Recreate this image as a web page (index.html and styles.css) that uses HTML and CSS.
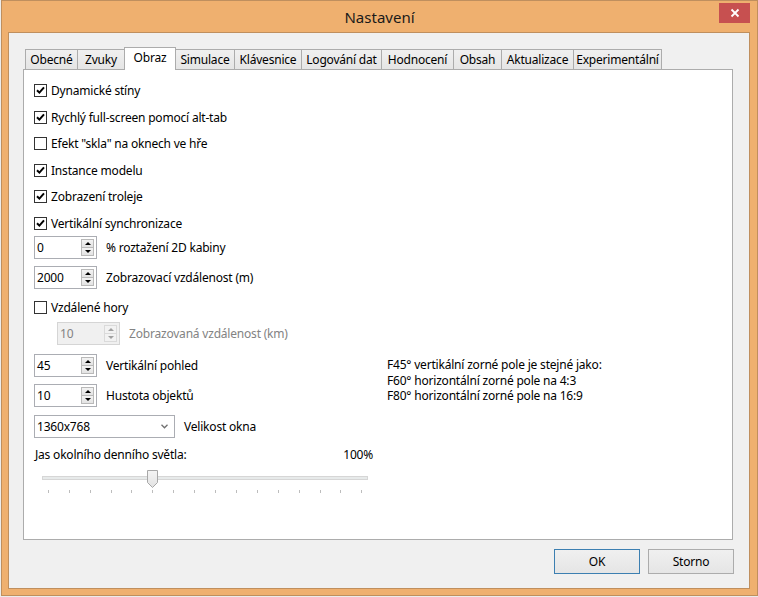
FILE: index.html
```html
<!DOCTYPE html>
<html lang="cs">

<head>
    <meta charset="UTF-8">
    <title>Nastavení</title>
    <link rel="stylesheet" href="styles.css">
</head>

<body>
    <div class="window">
        <div class="titlebar">
            <span class="title">Nastavení</span>
            <button class="close" title="Zavřít">
                <svg width="10" height="10" viewBox="0 0 10 10">
                    <path d="M1.5 1.5 L8.5 8.5 M8.5 1.5 L1.5 8.5" stroke="#fff" stroke-width="1.8" fill="none" />
                </svg>
            </button>
        </div>

        <div class="client">
            <div class="tabs">
                <div class="tab w53">Obecné</div>
                <div class="tab w48">Zvuky</div>
                <div class="tab w52 selected">Obraz</div>
                <div class="tab w60">Simulace</div>
                <div class="tab w68">Klávesnice</div>
                <div class="tab w81">Logování dat</div>
                <div class="tab w73">Hodnocení</div>
                <div class="tab w49">Obsah</div>
                <div class="tab w73">Aktualizace</div>
                <div class="tab w89">Experimentální</div>
            </div>

            <div class="panel">
                <div class="checks">
                    <label class="check"><span class="box on"></span>Dynamické stíny</label>
                    <label class="check"><span class="box on"></span>Rychlý full-screen pomocí alt-tab</label>
                    <label class="check"><span class="box"></span>Efekt "skla" na oknech ve hře</label>
                    <label class="check"><span class="box on"></span>Instance modelu</label>
                    <label class="check"><span class="box on"></span>Zobrazení troleje</label>
                    <label class="check"><span class="box on"></span>Vertikální synchronizace</label>
                </div>

                <div class="field mt6">
                    <div class="spin">
                        <span>0</span>
                        <span class="spin-btns"><span class="spin-up"></span><span class="spin-down"></span></span>
                    </div>
                    <span>% roztažení 2D kabiny</span>
                </div>

                <div class="field mt7">
                    <div class="spin">
                        <span>2000</span>
                        <span class="spin-btns"><span class="spin-up"></span><span class="spin-down"></span></span>
                    </div>
                    <span>Zobrazovací vzdálenost (m)</span>
                </div>

                <label class="check mt12"><span class="box"></span>Vzdálené hory</label>

                <div class="field mt8 indent disabled">
                    <div class="spin">
                        <span>10</span>
                        <span class="spin-btns"><span class="spin-up"></span><span class="spin-down"></span></span>
                    </div>
                    <span>Zobrazovaná vzdálenost (km)</span>
                </div>

                <div class="lower mt9">
                    <div class="lower-left">
                        <div class="field">
                            <div class="spin">
                                <span>45</span>
                                <span class="spin-btns"><span class="spin-up"></span><span class="spin-down"></span></span>
                            </div>
                            <span>Vertikální pohled</span>
                        </div>

                        <div class="field mt6">
                            <div class="spin">
                                <span>10</span>
                                <span class="spin-btns"><span class="spin-up"></span><span class="spin-down"></span></span>
                            </div>
                            <span>Hustota objektů</span>
                        </div>

                        <div class="field mt8">
                            <div class="combo">
                                <span>1360x768</span>
                                <svg width="7" height="5" viewBox="0 0 7 5">
                                    <path d="M0.5 0.8 L3.5 3.8 L6.5 0.8" stroke="#707070" stroke-width="1.3" fill="none" />
                                </svg>
                            </div>
                            <span>Velikost okna</span>
                        </div>

                        <div class="slider-head mt9">
                            <span>Jas okolního denního světla:</span>
                            <span>100%</span>
                        </div>

                        <svg class="slider" width="340" height="28" viewBox="0 0 340 28">
                            <defs>
                                <linearGradient id="thumbFill" x1="0" y1="0" x2="0" y2="1">
                                    <stop offset="0" stop-color="#f4f4f4" />
                                    <stop offset="1" stop-color="#e3e3e3" />
                                </linearGradient>
                            </defs>
                            <rect x="8.5" y="9.5" width="325" height="3" fill="#e7eaea" stroke="#d6d6d6" />
                            <g stroke="#bdbdbd" stroke-width="1">
                                <line x1="14.5" y1="23" x2="14.5" y2="26" />
                                <line x1="35.5" y1="23" x2="35.5" y2="26" />
                                <line x1="56.5" y1="23" x2="56.5" y2="26" />
                                <line x1="77.5" y1="23" x2="77.5" y2="26" />
                                <line x1="97.5" y1="23" x2="97.5" y2="26" />
                                <line x1="118.5" y1="23" x2="118.5" y2="26" />
                                <line x1="139.5" y1="23" x2="139.5" y2="26" />
                                <line x1="160.5" y1="23" x2="160.5" y2="26" />
                                <line x1="181.5" y1="23" x2="181.5" y2="26" />
                                <line x1="202.5" y1="23" x2="202.5" y2="26" />
                                <line x1="223.5" y1="23" x2="223.5" y2="26" />
                                <line x1="244.5" y1="23" x2="244.5" y2="26" />
                                <line x1="265.5" y1="23" x2="265.5" y2="26" />
                                <line x1="286.5" y1="23" x2="286.5" y2="26" />
                                <line x1="306.5" y1="23" x2="306.5" y2="26" />
                                <line x1="327.5" y1="23" x2="327.5" y2="26" />
                            </g>
                            <path d="M113.5 3.5 H123.5 V15.5 L118.5 20.5 L113.5 15.5 Z" fill="url(#thumbFill)" stroke="#a8a8a8" />
                        </svg>
                    </div>

                    <div class="fov-note">
                        <div>F45° vertikální zorné pole je stejné jako:</div>
                        <div>F60° horizontální zorné pole na 4:3</div>
                        <div>F80° horizontální zorné pole na 16:9</div>
                    </div>
                </div>
            </div>

            <div class="buttons">
                <button class="btn btn-default">OK</button>
                <button class="btn">Storno</button>
            </div>
        </div>
    </div>
</body>

</html>
```

FILE: styles.css
```css
* {
    box-sizing: border-box;
}

body {
    margin: 0;
    background-color: #ececec;
    font-family: "Noto Sans", "Open Sans", sans-serif;
    font-size: 12px;
    letter-spacing: -0.2px;
    color: #000;
}

.window {
    width: 757px;
    height: 596px;
    margin-left: 1px;
    background-color: #efb06f;
    border: 1px solid #bf8f5e;
    display: flex;
    flex-direction: column;
}

/* title bar */
.titlebar {
    height: 31px;
    display: grid;
    grid-template-columns: 1fr auto 1fr;
    align-items: center;
}

.title {
    grid-column: 2;
    font-size: 15px;
    letter-spacing: 0;
    color: #1a1a1a;
}

.close {
    grid-column: 3;
    justify-self: end;
    align-self: start;
    width: 31px;
    height: 20px;
    margin: 2px 7px 0 0;
    padding: 0;
    border: none;
    background-color: #c75050;
    display: flex;
    align-items: center;
    justify-content: center;
}

/* dialog body */
.client {
    flex: 1;
    margin: 0 7px 6px 6px;
    border: 1px solid #bf8f5e;
    background-color: #f0f0f0;
    padding: 14px 15px 0 14px;
}

.tabs {
    display: flex;
    align-items: flex-end;
    height: 22px;
    padding-left: 2px;
}

.tab {
    height: 20px;
    border: 1px solid #acacac;
    border-bottom: none;
    background: linear-gradient(#f0f0f0, #e5e5e5);
    text-align: center;
    line-height: 20px;
    margin-left: -1px;
}

.tab:first-child {
    margin-left: 0;
}

.tab.selected {
    height: 23px;
    line-height: 19px;
    margin-bottom: -1px;
    background: #fff;
    position: relative;
    z-index: 1;
}

.w48 { width: 48px; }
.w49 { width: 49px; }
.w52 { width: 52px; }
.w53 { width: 53px; }
.w60 { width: 60px; }
.w68 { width: 68px; }
.w73 { width: 73px; }
.w81 { width: 81px; }
.w89 { width: 89px; }

.panel {
    width: 710px;
    height: 471px;
    border: 1px solid #acacac;
    background-color: #fff;
    padding: 14px 0 0 10px;
    display: flex;
    flex-direction: column;
    align-items: flex-start;
}

.mt6 { margin-top: 6.5px; }
.mt7 { margin-top: 7px; }
.mt8 { margin-top: 8px; }
.mt9 { margin-top: 9px; }
.mt12 { margin-top: 12px; }

/* checkboxes */
.checks {
    display: flex;
    flex-direction: column;
    gap: 13.5px;
}

.check {
    display: flex;
    align-items: center;
    height: 13px;
    white-space: nowrap;
}

.box {
    width: 13px;
    height: 13px;
    margin-right: 4px;
    border: 1px solid #333;
    background: #fff;
    flex-shrink: 0;
}

.box.on {
    background: #fff url("data:image/svg+xml,%3Csvg xmlns='http://www.w3.org/2000/svg' width='11' height='11'%3E%3Cpath d='M2 5.2 L4.4 7.6 L9 2.4' stroke='%23000' stroke-width='2' fill='none'/%3E%3C/svg%3E") no-repeat center;
}

/* spin boxes and combo */
.field {
    display: flex;
    align-items: center;
    gap: 9px;
    white-space: nowrap;
}

.indent {
    margin-left: 23px;
}

.spin {
    width: 63px;
    height: 23px;
    border: 1px solid #abadb3;
    background-color: #fff;
    display: flex;
    align-items: center;
    justify-content: space-between;
    padding: 0 2px 0 2px;
}

.spin-btns {
    display: flex;
    flex-direction: column;
    width: 13px;
    height: 17px;
}

.spin-up,
.spin-down {
    flex: 1;
    border: 1px solid #b9b9b9;
    background: linear-gradient(#f3f3f3, #e3e3e3);
    display: flex;
    align-items: center;
    justify-content: center;
}

.spin-down {
    margin-top: -1px;
}

.spin-up::after {
    content: "";
    border-left: 3px solid transparent;
    border-right: 3px solid transparent;
    border-bottom: 3px solid #000;
}

.spin-down::after {
    content: "";
    border-left: 3px solid transparent;
    border-right: 3px solid transparent;
    border-top: 3px solid #000;
}

.disabled {
    color: #838383;
}

.disabled .spin {
    background-color: #f0f0f0;
    border-color: #d5d5d5;
}

.disabled .spin-up,
.disabled .spin-down {
    border-color: #dadada;
    background: #f2f2f2;
}

.disabled .spin-up::after {
    border-bottom-color: #a0a0a0;
}

.disabled .spin-down::after {
    border-top-color: #a0a0a0;
}

.combo {
    width: 141px;
    height: 23px;
    border: 1px solid #abadb3;
    background-color: #fff;
    display: flex;
    align-items: center;
    justify-content: space-between;
    padding: 0 6px 0 2px;
}

/* lower part: fields with note on the right */
.lower {
    display: flex;
    gap: 13px;
}

.lower-left {
    width: 340px;
    display: flex;
    flex-direction: column;
}

.slider-head {
    display: flex;
    justify-content: space-between;
    line-height: 16px;
    padding: 0 1px;
}

.slider {
    display: block;
    margin-top: 4px;
}

.fov-note {
    margin-top: 3px;
    line-height: 15.5px;
    white-space: nowrap;
}

/* bottom buttons */
.buttons {
    display: flex;
    justify-content: flex-end;
    gap: 8px;
    margin-top: 9px;
    width: 711px;
}

.btn {
    width: 86px;
    height: 25px;
    border: 1px solid #acacac;
    background: linear-gradient(#f0f0f0, #e5e5e5);
    font-family: inherit;
    font-size: 12px;
    letter-spacing: inherit;
    color: #000;
    padding: 0;
}

.btn-default {
    border-color: #3c7fb1;
}
```
